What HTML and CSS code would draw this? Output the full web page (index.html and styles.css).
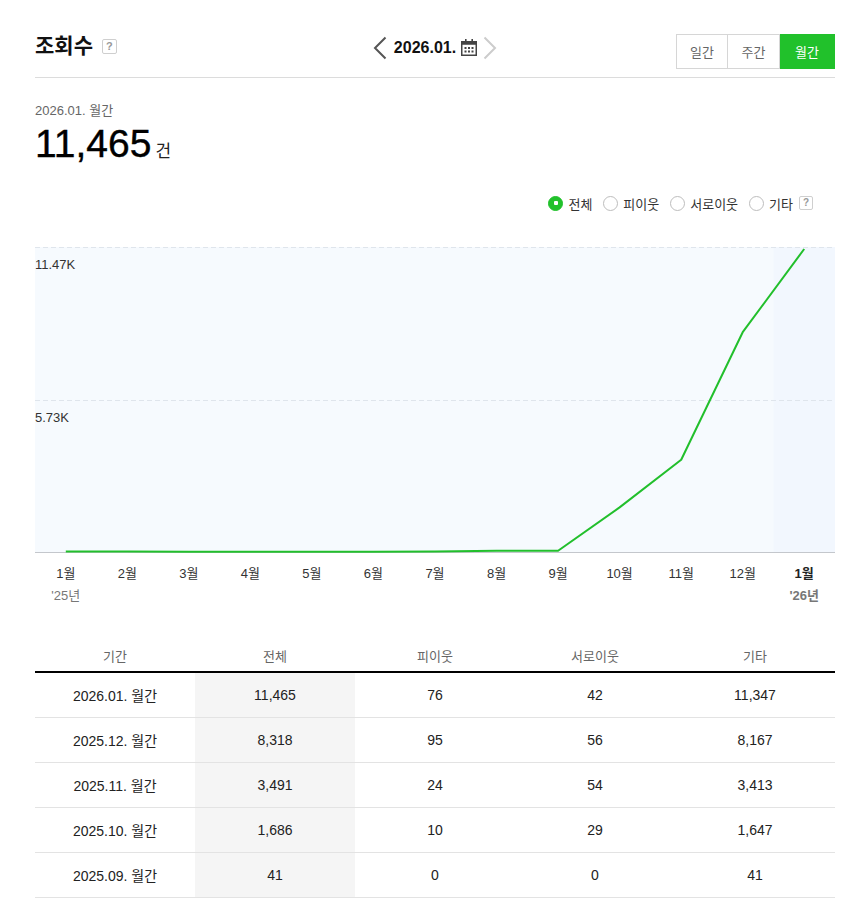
FILE: index.html
```html
<!DOCTYPE html>
<html lang="ko">
<head>
<meta charset="utf-8">
<title>조회수</title>
<link rel="stylesheet" href="styles.css">
</head>
<body>
<div class="page">
  <header class="head">
    <div class="title-wrap">
      <h1 class="title">조회수</h1>
      <span class="help">?</span>
    </div>
    <div class="datenav">
      <svg class="chev" width="14" height="24" viewBox="0 0 14 24"><path d="M12.5 1.5 L2 12 L12.5 22.5" fill="none" stroke="#555" stroke-width="2"/></svg>
      <span class="date">2026.01.</span>
      <svg class="cal" width="16" height="17" viewBox="0 0 16 17">
        <rect x="4" y="0" width="1.6" height="3.5" fill="#444"/>
        <rect x="10.4" y="0" width="1.6" height="3.5" fill="#444"/>
        <rect x="0.75" y="2.75" width="14.5" height="13.5" fill="none" stroke="#444" stroke-width="1.5"/>
        <rect x="0.75" y="2.75" width="14.5" height="3" fill="#444"/>
        <g fill="#444">
          <rect x="3.5" y="8" width="2" height="2"/><rect x="7" y="8" width="2" height="2"/><rect x="10.5" y="8" width="2" height="2"/>
          <rect x="3.5" y="11.5" width="2" height="2"/><rect x="7" y="11.5" width="2" height="2"/><rect x="10.5" y="11.5" width="2" height="2"/>
        </g>
      </svg>
      <svg class="chev" width="14" height="24" viewBox="0 0 14 24"><path d="M1.5 1.5 L12 12 L1.5 22.5" fill="none" stroke="#ccc" stroke-width="2"/></svg>
    </div>
    <div class="tabs">
      <button class="tab">일간</button>
      <button class="tab">주간</button>
      <button class="tab active">월간</button>
    </div>
  </header>

  <section class="summary">
    <div class="sub">2026.01. 월간</div>
    <div class="total"><span class="num">11,465</span><span class="unit">건</span></div>
  </section>

  <div class="legend">
    <label class="opt"><span class="radio on"></span>전체</label>
    <label class="opt"><span class="radio"></span>피이웃</label>
    <label class="opt"><span class="radio"></span>서로이웃</label>
    <label class="opt"><span class="radio"></span>기타</label>
    <span class="help small">?</span>
  </div>

  <div class="chart">
    <svg class="plot" width="800" height="306" viewBox="0 0 800 306">
      <rect x="0" y="0" width="800" height="305" fill="#f6fafe"/>
      <rect x="738.5" y="0" width="61.5" height="305" fill="#f2f7fe"/>
      <line x1="0" y1="0.5" x2="800" y2="0.5" stroke="#dfe5ec" stroke-width="1" stroke-dasharray="5 3"/>
      <line x1="0" y1="153.5" x2="800" y2="153.5" stroke="#dfe5ec" stroke-width="1" stroke-dasharray="5 3"/>
      <line x1="0" y1="305.5" x2="800" y2="305.5" stroke="#c4c7cc" stroke-width="1"/>
      <text class="ylab" x="0" y="22">11.47K</text>
      <text class="ylab" x="0" y="175">5.73K</text>
      <polyline fill="none" stroke="#22bf2c" stroke-width="2" stroke-linejoin="round"
        points="30.8,304.6 92.3,304.6 153.8,304.7 215.4,304.7 276.9,304.8 338.5,304.7 400,304.6 461.5,303.8 523.1,303.8 584.6,260.4 646.2,212.7 707.7,85.2 769.2,2"/>
    </svg>
    <div class="xaxis">
      <div class="xl"><span class="m">1월</span><span class="y">'25년</span></div>
      <div class="xl"><span class="m">2월</span></div>
      <div class="xl"><span class="m">3월</span></div>
      <div class="xl"><span class="m">4월</span></div>
      <div class="xl"><span class="m">5월</span></div>
      <div class="xl"><span class="m">6월</span></div>
      <div class="xl"><span class="m">7월</span></div>
      <div class="xl"><span class="m">8월</span></div>
      <div class="xl"><span class="m">9월</span></div>
      <div class="xl"><span class="m">10월</span></div>
      <div class="xl"><span class="m">11월</span></div>
      <div class="xl"><span class="m">12월</span></div>
      <div class="xl cur"><span class="m">1월</span><span class="y">'26년</span></div>
    </div>
  </div>

  <table class="stats">
    <thead>
      <tr><th>기간</th><th>전체</th><th>피이웃</th><th>서로이웃</th><th>기타</th></tr>
    </thead>
    <tbody>
      <tr><td>2026.01. 월간</td><td class="hl">11,465</td><td>76</td><td>42</td><td>11,347</td></tr>
      <tr><td>2025.12. 월간</td><td class="hl">8,318</td><td>95</td><td>56</td><td>8,167</td></tr>
      <tr><td>2025.11. 월간</td><td class="hl">3,491</td><td>24</td><td>54</td><td>3,413</td></tr>
      <tr><td>2025.10. 월간</td><td class="hl">1,686</td><td>10</td><td>29</td><td>1,647</td></tr>
      <tr><td>2025.09. 월간</td><td class="hl">41</td><td>0</td><td>0</td><td>41</td></tr>
    </tbody>
  </table>
</div>
</body>
</html>
```

FILE: styles.css
```css
* { box-sizing: border-box; }
html, body { margin: 0; padding: 0; background: #fff; }
body {
  font-family: "Liberation Sans", "Noto Sans CJK KR", sans-serif;
  color: #222;
}
.page {
  width: 856px;
  padding: 0 21px 0 35px;
}

/* header */
.head {
  display: grid;
  grid-template-columns: 1fr auto 1fr;
  align-items: start;
  height: 78px;
  border-bottom: 1px solid #dcdcdc;
}
.title-wrap {
  display: flex;
  align-items: center;
  gap: 9px;
  margin-top: 32px;
}
.title {
  margin: 0;
  font-size: 21px;
  line-height: 28px;
  font-weight: 700;
  color: #111;
}
.help {
  display: inline-flex;
  align-items: center;
  justify-content: center;
  width: 15px;
  height: 15px;
  border: 1px solid #cfcfcf;
  border-radius: 2px;
  font-size: 11px;
  line-height: 1;
  font-weight: 700;
  color: #999;
  background: #fff;
}
.datenav {
  display: flex;
  align-items: center;
  margin-top: 36px;
  height: 24px;
}
.datenav .date {
  font-size: 16px;
  font-weight: 700;
  color: #111;
  margin: 0 5px 0 7px;
  line-height: 24px;
}
.datenav .cal { margin-right: 6px; margin-top: -1px; }
.tabs {
  justify-self: end;
  display: flex;
  margin-top: 34px;
}
.tab {
  width: 52px;
  height: 35px;
  border: 1px solid #d6d6d6;
  border-left-width: 0;
  background: #fff;
  font-family: inherit;
  font-size: 13px;
  color: #666;
  padding: 0;
  cursor: pointer;
}
.tab:first-child { border-left-width: 1px; }
.tab.active {
  width: 55px;
  background: #21c12b;
  border-color: #21c12b;
  color: #fff;
}

/* summary */
.summary { padding-top: 24px; }
.sub {
  font-size: 13px;
  line-height: 18px;
  color: #666;
}
.total {
  display: flex;
  align-items: baseline;
  margin-top: 2px;
  line-height: 44px;
}
.num {
  font-size: 39px;
  color: #000;
  -webkit-text-stroke: 0.4px #000;
}
.unit {
  font-size: 17px;
  color: #222;
  margin-left: 4px;
}

/* legend */
.legend {
  display: flex;
  justify-content: flex-end;
  align-items: center;
  margin-top: 19px;
  height: 20px;
  padding-right: 22px;
}
.opt {
  display: flex;
  align-items: center;
  font-size: 13px;
  color: #333;
  margin-left: 11px;
}
.opt:first-child { margin-left: 0; }
.radio {
  width: 15px;
  height: 15px;
  border-radius: 50%;
  border: 1px solid #bdbdbd;
  background: #fff;
  margin-right: 5px;
  position: relative;
}
.radio.on {
  background: #21c12b;
  border-color: #21c12b;
}
.radio.on::after {
  content: "";
  position: absolute;
  left: 4.5px;
  top: 4.5px;
  width: 4px;
  height: 4px;
  border-radius: 1px;
  background: #fff;
}
.help.small {
  width: 14px;
  height: 14px;
  font-size: 10px;
  margin-left: 6px;
}

/* chart */
.chart { margin-top: 34px; }
.plot { display: block; overflow: visible; }
.ylab {
  font-family: "Liberation Sans", sans-serif;
  font-size: 13px;
  fill: #333;
}
.xaxis {
  display: grid;
  grid-template-columns: repeat(13, 1fr);
  width: 800px;
  margin-top: 12px;
}
.xl {
  display: flex;
  flex-direction: column;
  align-items: center;
}
.xl .m {
  font-size: 13px;
  line-height: 18px;
  color: #333;
}
.xl .y {
  font-size: 13px;
  line-height: 18px;
  color: #777;
  margin-top: 4px;
}
.xl.cur .m, .xl.cur .y { font-weight: 700; }
.xl.cur .m { color: #222; }

/* table */
.stats {
  width: 800px;
  border-collapse: collapse;
  margin-top: 35px;
  table-layout: fixed;
}
.stats th {
  font-weight: 400;
  font-size: 13px;
  color: #666;
  height: 32px;
  padding: 0;
  border-bottom: 2px solid #000;
}
.stats td {
  text-align: center;
  font-size: 14px;
  color: #222;
  height: 45px;
  padding: 0;
  border-bottom: 1px solid #e3e3e3;
}
.stats td.hl { background: #f5f5f5; }
```
